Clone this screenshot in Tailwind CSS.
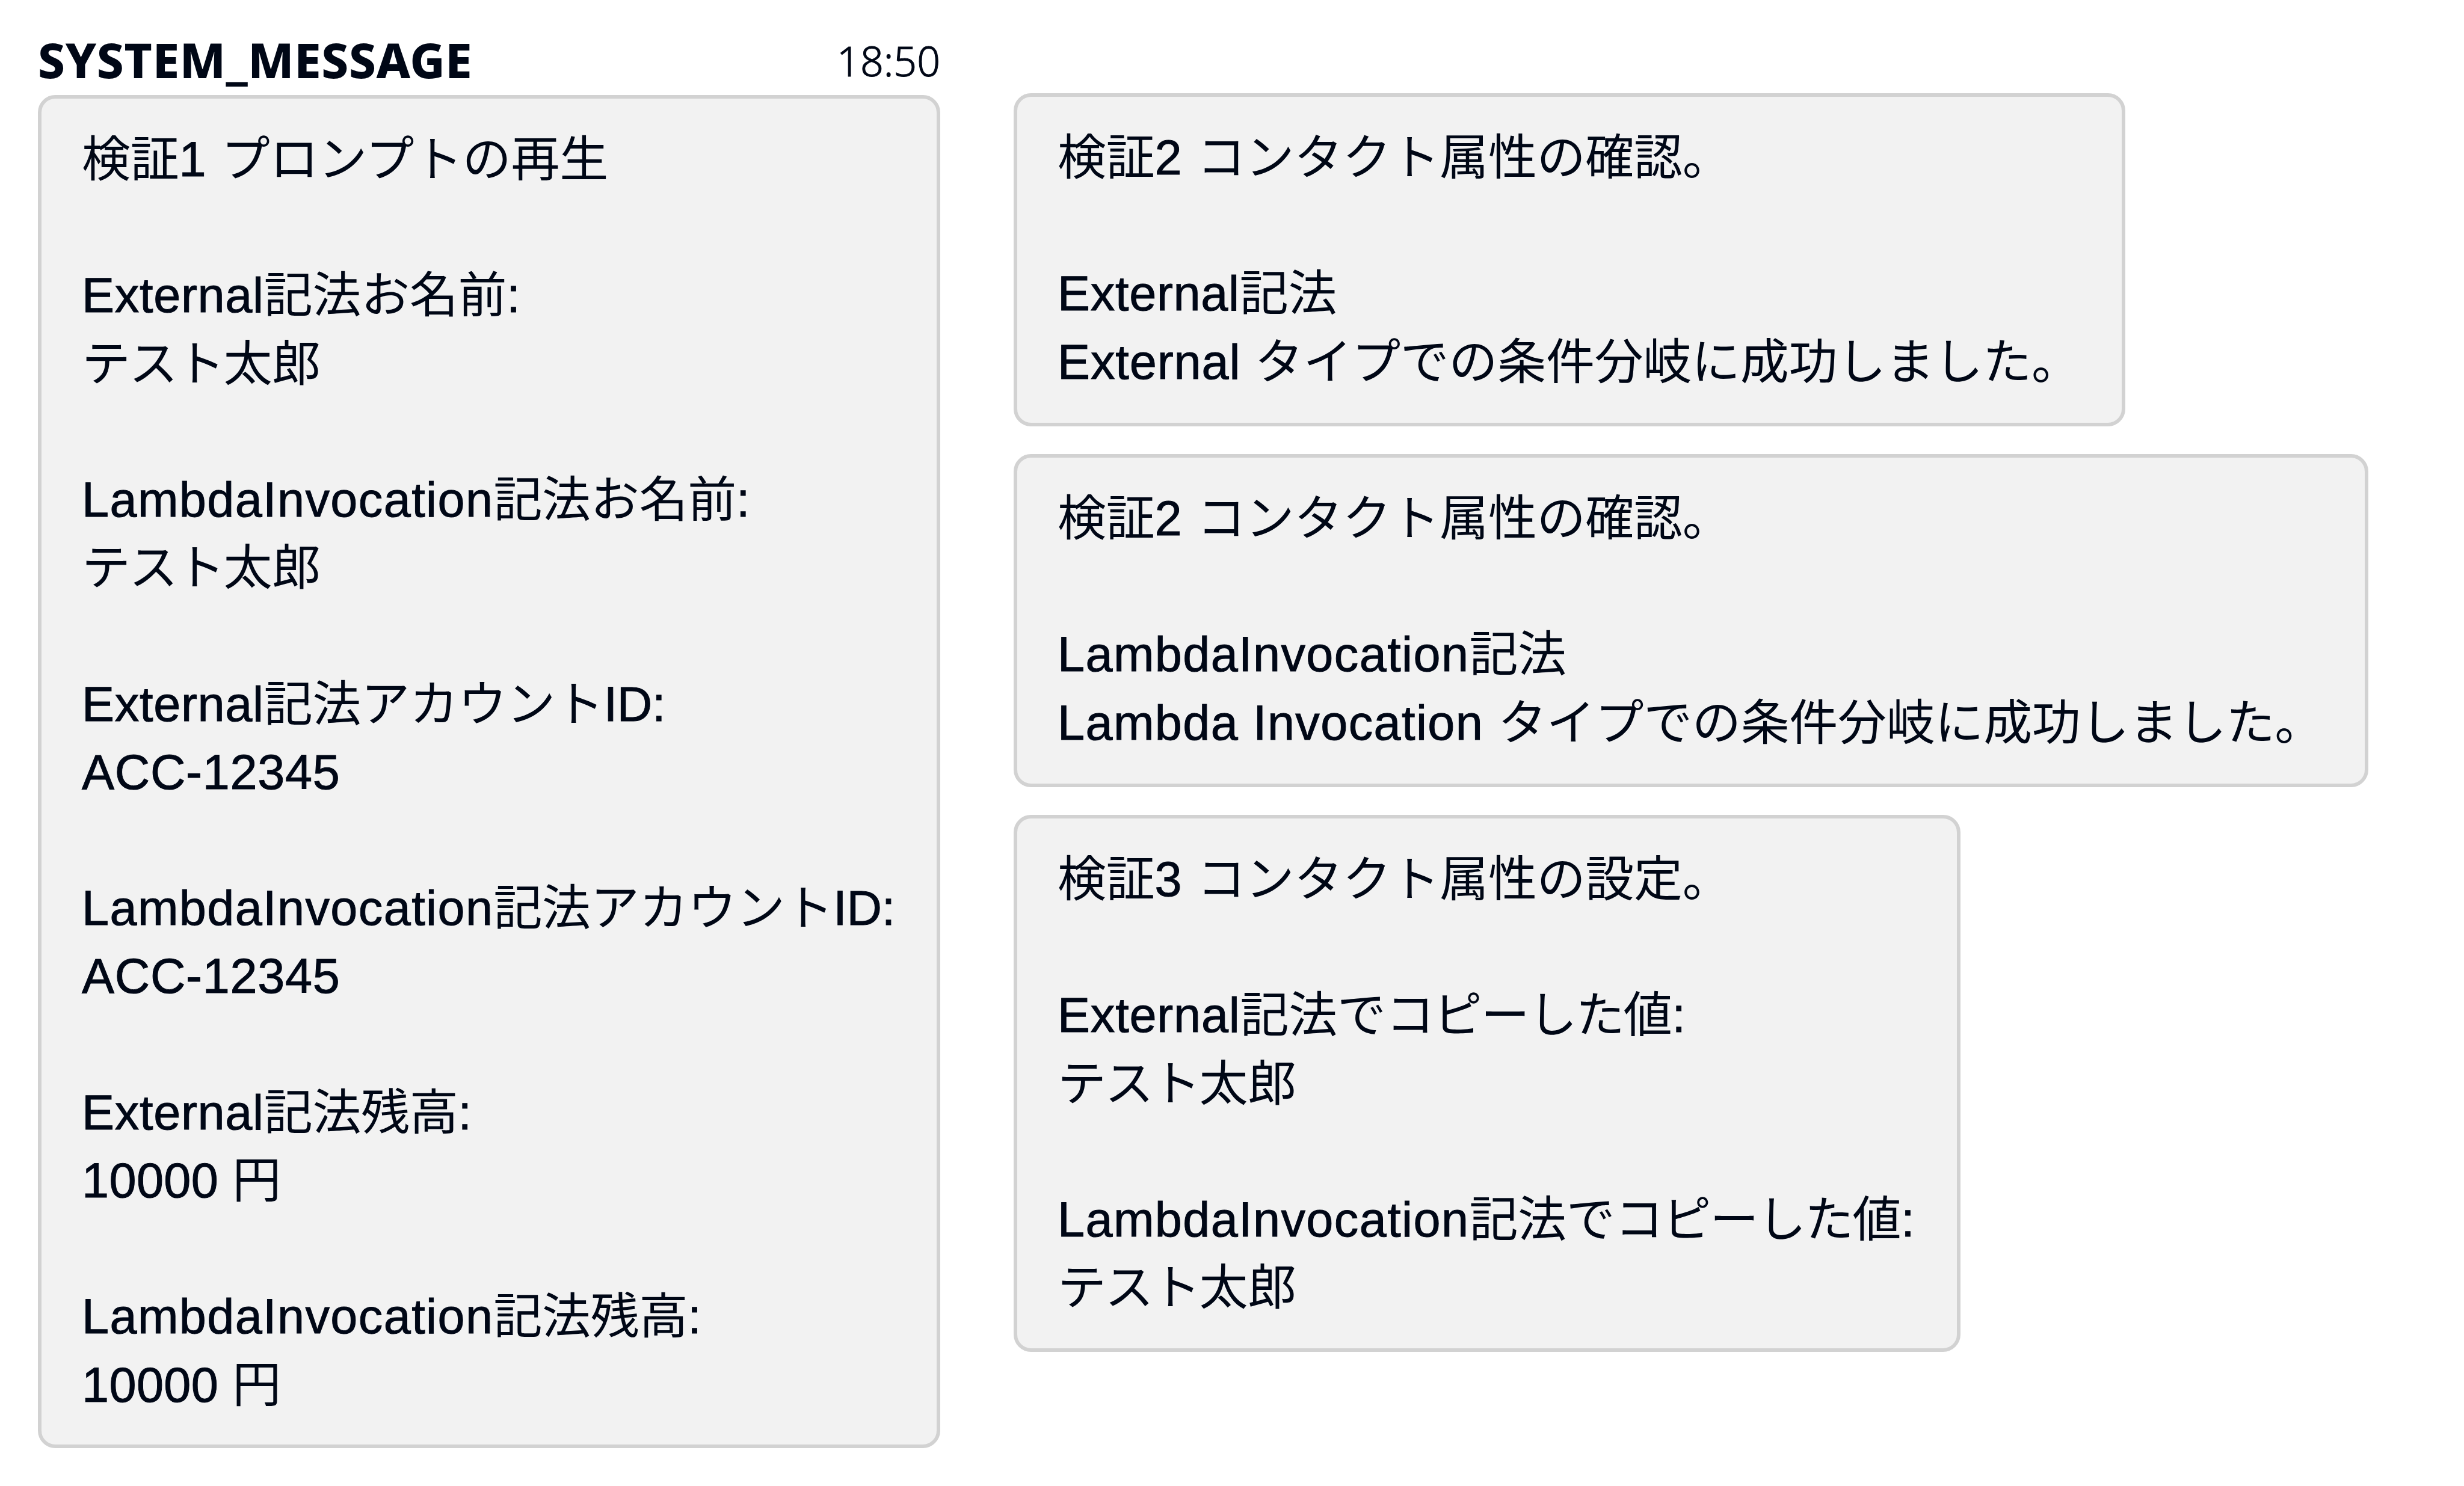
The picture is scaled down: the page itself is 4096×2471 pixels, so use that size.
<!DOCTYPE html>
<html lang="ja">
<head>
    <meta charset="UTF-8">
    <meta name="viewport" content="width=device-width, initial-scale=1.0">
    <title>Chat transcript</title>
    <script src="https://cdn.jsdelivr.net/npm/@tailwindcss/browser@4"></script>
</head>
<body class="bg-white text-[#000716] overflow-hidden">

<div class="flex items-start w-[4096px] h-[2471px] pl-[63px]">

    <!-- left column -->
    <div class="w-[1500px]">
        <div class="flex items-baseline justify-between h-[158px] pt-[42px] leading-[113px] font-['Noto_Sans',sans-serif]">
            <span class="text-[80px] font-extrabold tracking-[0.6px]">SYSTEM_MESSAGE</span>
            <span class="text-[68px] font-light -translate-y-[3px] [-webkit-text-stroke:1px]">18:50</span>
        </div>
        <div class="h-[2250px] border-6 border-[#d2d2d2] rounded-[29px] bg-[#f2f2f2] pl-[67px] pt-[45px] text-[81px] leading-[113.2px] tracking-[-0.3px] whitespace-nowrap font-['Liberation_Sans','Noto_Sans_CJK_JP',sans-serif]">
            <p>検証<span class="tracking-[1.4px] [-webkit-text-stroke:1px]">1 </span>プロンプトの再生</p>
            <br>
            <p><span class="tracking-[0.7px] [-webkit-text-stroke:1px]">External</span>記法お名前<span class="[-webkit-text-stroke:1px]">:</span></p>
            <p><span class="tracking-[-2.5px]">テスト</span>太郎</p>
            <br>
            <p><span class="tracking-[1.4px] [-webkit-text-stroke:1px]">LambdaInvocation</span>記法お名前<span class="[-webkit-text-stroke:1px]">:</span></p>
            <p><span class="tracking-[-2.5px]">テスト</span>太郎</p>
            <br>
            <p><span class="tracking-[0.7px] [-webkit-text-stroke:1px]">External</span>記法アカウント<span class="[-webkit-text-stroke:1px]">ID:</span></p>
            <p class="tracking-[0.7px] [-webkit-text-stroke:1px]">ACC-12345</p>
            <br>
            <p><span class="tracking-[1.4px] [-webkit-text-stroke:1px]">LambdaInvocation</span>記法アカウント<span class="[-webkit-text-stroke:1px]">ID:</span></p>
            <p class="tracking-[0.7px] [-webkit-text-stroke:1px]">ACC-12345</p>
            <br>
            <p><span class="tracking-[0.7px] [-webkit-text-stroke:1px]">External</span>記法残高<span class="[-webkit-text-stroke:1px]">:</span></p>
            <p><span class="tracking-[0.4px] [-webkit-text-stroke:1px]">10000 </span>円</p>
            <br>
            <p><span class="tracking-[1.4px] [-webkit-text-stroke:1px]">LambdaInvocation</span>記法残高<span class="[-webkit-text-stroke:1px]">:</span></p>
            <p><span class="tracking-[0.4px] [-webkit-text-stroke:1px]">10000 </span>円</p>
        </div>
    </div>

    <!-- right column -->
    <div class="flex flex-col gap-[46px] ml-[122px] mt-[155px] text-[81px] leading-[113.2px] tracking-[-0.3px] whitespace-nowrap font-['Liberation_Sans','Noto_Sans_CJK_JP',sans-serif]">
        <div class="w-[1848px] h-[554px] border-6 border-[#d2d2d2] rounded-[29px] bg-[#f2f2f2] pl-[67px] pt-[45px]">
            <p>検証<span class="tracking-[1.4px] [-webkit-text-stroke:1px]">2 </span>コンタクト属性の確認。</p>
            <br>
            <p><span class="tracking-[0.7px] [-webkit-text-stroke:1px]">External</span>記法</p>
            <p><span class="tracking-[0.9px] [-webkit-text-stroke:1px]">External </span>タイプでの条件分岐に成功しました。</p>
        </div>
        <div class="w-[2252px] h-[554px] border-6 border-[#d2d2d2] rounded-[29px] bg-[#f2f2f2] pl-[67px] pt-[45px]">
            <p>検証<span class="tracking-[1.4px] [-webkit-text-stroke:1px]">2 </span>コンタクト属性の確認。</p>
            <br>
            <p><span class="tracking-[1.4px] [-webkit-text-stroke:1px]">LambdaInvocation</span>記法</p>
            <p><span class="tracking-[1.4px] [-webkit-text-stroke:1px]">Lambda Invocation </span>タイプでの条件分岐に成功しました。</p>
        </div>
        <div class="w-[1574px] h-[893px] border-6 border-[#d2d2d2] rounded-[29px] bg-[#f2f2f2] pl-[67px] pt-[45px]">
            <p>検証<span class="tracking-[1.4px] [-webkit-text-stroke:1px]">3 </span>コンタクト属性の設定。</p>
            <br>
            <p><span class="tracking-[0.8px] [-webkit-text-stroke:1px]">External</span>記法で<span class="tracking-[-2px]">コピーした</span>値<span class="[-webkit-text-stroke:1px]">:</span></p>
            <p><span class="tracking-[-2.5px]">テスト</span>太郎</p>
            <br>
            <p><span class="tracking-[1.4px] [-webkit-text-stroke:1px]">LambdaInvocation</span>記法で<span class="tracking-[-2px]">コピーした</span>値<span class="[-webkit-text-stroke:1px]">:</span></p>
            <p><span class="tracking-[-2.5px]">テスト</span>太郎</p>
        </div>
    </div>

</div>

</body>
</html>
